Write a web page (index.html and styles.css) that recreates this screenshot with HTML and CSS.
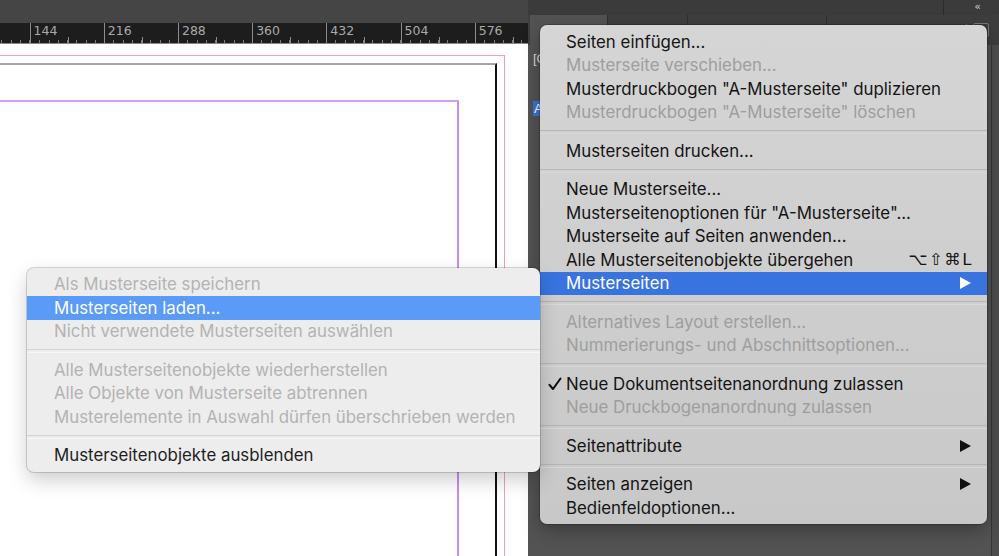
FILE: index.html
```html
<!DOCTYPE html>
<html lang="de">
<head>
<meta charset="utf-8">
<title>Seiten – Musterseiten</title>
<link rel="stylesheet" href="styles.css">
</head>
<body>
<div class="app">
  <div class="doc">
    <div class="toolbar"></div>
    <div class="ruler">
      <div class="seg">72</div>
      <div class="seg">144</div>
      <div class="seg">216</div>
      <div class="seg">288</div>
      <div class="seg">360</div>
      <div class="seg">432</div>
      <div class="seg">504</div>
      <div class="seg">576</div>
      <div class="seg">648</div>
    </div>
    <div class="canvas">
      <div class="bleed">
        <div class="page">
          <div class="margins"></div>
        </div>
      </div>
    </div>
  </div>
  <div class="panel">
    <div class="dock-head"><span class="dock-div"></span><span class="collapse">‹‹</span></div>
    <div class="tabs">
      <div class="tab active"><span class="x">×</span>Seiten</div>
      <div class="tab">Ebenen</div>
      <div class="tab">Verknüpfungen</div>
      <div class="tab-fill"><span class="more">»</span><span class="bar"></span><span class="hamb"></span></div>
    </div>
    <div class="panel-body">
      <div class="plist">
        <div class="prow">[Ohne]</div>
        <div class="prow sel"><span class="hl">A</span>-Musterseite</div>
      </div>
      <div class="scroll"></div>
    </div>
  </div>
</div>

<div class="menu main-menu">
  <div class="item"><span class="mark"></span><span>Seiten einfügen...</span></div>
  <div class="item dis"><span class="mark"></span><span>Musterseite verschieben...</span></div>
  <div class="item"><span class="mark"></span><span>Musterdruckbogen "A-Musterseite" duplizieren</span></div>
  <div class="item dis"><span class="mark"></span><span>Musterdruckbogen "A-Musterseite" löschen</span></div>
  <div class="sep"></div>
  <div class="item"><span class="mark"></span><span>Musterseiten drucken...</span></div>
  <div class="sep"></div>
  <div class="item"><span class="mark"></span><span>Neue Musterseite...</span></div>
  <div class="item"><span class="mark"></span><span>Musterseitenoptionen für "A-Musterseite"...</span></div>
  <div class="item"><span class="mark"></span><span>Musterseite auf Seiten anwenden...</span></div>
  <div class="item"><span class="mark"></span><span>Alle Musterseitenobjekte übergehen</span><span class="key">⌥⇧⌘L</span></div>
  <div class="item hot"><span class="mark"></span><span>Musterseiten</span><svg class="arrow" width="11" height="12" viewBox="0 0 11 12"><polygon points="0,0 11,6 0,12" fill="currentColor"/></svg></div>
  <div class="sep"></div>
  <div class="item dis"><span class="mark"></span><span>Alternatives Layout erstellen...</span></div>
  <div class="item dis"><span class="mark"></span><span>Nummerierungs- und Abschnittsoptionen...</span></div>
  <div class="sep"></div>
  <div class="item"><span class="mark"><svg width="14" height="14" viewBox="0 0 14 14"><path d="M1.5 7.8 L5 12 L12.5 1.5" fill="none" stroke="#111" stroke-width="2.1" stroke-linecap="round" stroke-linejoin="round"/></svg></span><span>Neue Dokumentseitenanordnung zulassen</span></div>
  <div class="item dis"><span class="mark"></span><span>Neue Druckbogenanordnung zulassen</span></div>
  <div class="sep"></div>
  <div class="item"><span class="mark"></span><span>Seitenattribute</span><svg class="arrow" width="11" height="12" viewBox="0 0 11 12"><polygon points="0,0 11,6 0,12" fill="currentColor"/></svg></div>
  <div class="sep"></div>
  <div class="item"><span class="mark"></span><span>Seiten anzeigen</span><svg class="arrow" width="11" height="12" viewBox="0 0 11 12"><polygon points="0,0 11,6 0,12" fill="currentColor"/></svg></div>
  <div class="item"><span class="mark"></span><span>Bedienfeldoptionen...</span></div>
</div>

<div class="menu sub-menu">
  <div class="item dis"><span class="mark"></span><span>Als Musterseite speichern</span></div>
  <div class="item hot"><span class="mark"></span><span>Musterseiten laden...</span></div>
  <div class="item dis"><span class="mark"></span><span>Nicht verwendete Musterseiten auswählen</span></div>
  <div class="sep"></div>
  <div class="item dis"><span class="mark"></span><span>Alle Musterseitenobjekte wiederherstellen</span></div>
  <div class="item dis"><span class="mark"></span><span>Alle Objekte von Musterseite abtrennen</span></div>
  <div class="item dis"><span class="mark"></span><span>Musterelemente in Auswahl dürfen überschrieben werden</span></div>
  <div class="sep"></div>
  <div class="item"><span class="mark"></span><span>Musterseitenobjekte ausblenden</span></div>
</div>
</body>
</html>
```

FILE: styles.css
```css
* { box-sizing: border-box; }
html, body { margin: 0; padding: 0; }
body {
  width: 999px;
  height: 556px;
  overflow: hidden;
  background: #444;
  font-family: Inter, "Noto Sans", "DejaVu Sans", sans-serif;
  position: relative;
}
.app {
  display: flex;
  width: 999px;
  height: 556px;
}
.doc {
  width: 528px;
  flex: none;
  display: flex;
  flex-direction: column;
  overflow: hidden;
}
.toolbar {
  height: 23px;
  background: #454545;
  flex: none;
}
.ruler {
  height: 21px;
  flex: none;
  background: #1d1d1d;
  border-bottom: 1px solid #8a8a8a;
  display: flex;
  margin-left: -44.6px;
  overflow: hidden;
}
.seg {
  flex: none;
  width: 74.2px;
  border-left: 1px solid #8d8d8d;
  padding: 1px 0 0 3px;
  font-family: "DejaVu Sans", sans-serif;
  font-size: 12.5px;
  line-height: 14px;
  color: #a9a9a9;
  background:
    linear-gradient(#8d8d8d, #8d8d8d) 37px 100% / 1px 6px no-repeat,
    repeating-linear-gradient(to right, transparent 0 8.275px, #7d7d7d 8.275px 9.275px) 0 100% / 100% 3px no-repeat;
}
.canvas {
  flex: 1;
  background: #fff;
  overflow: hidden;
  padding-top: 11px;
}
.bleed {
  margin-left: -20px;
  width: 525px;
  height: 600px;
  border-top: 1px solid #f5a0b4;
  border-right: 1px solid #f5a0b4;
  padding-top: 7px;
}
.page {
  width: 517px;
  height: 600px;
  border-top: 2px solid #a4a4a4;
  border-right: 2px solid #111;
  padding-top: 35px;
}
.margins {
  width: 479px;
  height: 600px;
  border-top: 2px solid #d49cfb;
  border-right: 2px solid #c98bf6;
}

/* right panel */
.panel {
  flex: 1;
  display: flex;
  flex-direction: column;
  background: #535353;
}
.dock-head {
  height: 15px;
  flex: none;
  background: #3b3b3b;
  display: flex;
  justify-content: flex-end;
  align-items: stretch;
  font-family: "DejaVu Sans", sans-serif;
}
.dock-div {
  width: 1px;
  background: #2b2b2b;
  margin-right: 30px;
}
.collapse {
  font-size: 11px;
  line-height: 14px;
  color: #c9c9c9;
  margin-right: 20px;
  letter-spacing: -2px;
}
.tabs {
  height: 30px;
  flex: none;
  display: flex;
  background: #3e3e3e;
  padding-left: 2px;
  font-family: "Liberation Sans", sans-serif;
  font-size: 13px;
  font-weight: bold;
  color: #cfcfcf;
}
.tab {
  padding: 7px 12px 0;
  border-right: 1px solid #2e2e2e;
  white-space: nowrap;
}
.tab.active {
  width: 78px;
  background: #535353;
  color: #e6e6e6;
}
.tab:nth-child(2) { width: 80px; }
.tab:nth-child(3) { width: 139px; }
.x { font-weight: normal; margin-right: 6px; color: #aaa; }
.tab-fill {
  flex: 1;
  display: flex;
  justify-content: flex-end;
  align-items: center;
  gap: 6px;
  padding-right: 10px;
}
.more { color: #aaa; font-weight: normal; }
.bar { width: 1px; height: 12px; background: #888; }
.hamb { width: 16px; height: 14px; border: 1px solid #777; border-radius: 2px; }
.panel-body {
  flex: 1;
  display: flex;
}
.plist {
  flex: 1;
  padding: 6px 0 0 5px;
  font-family: "Liberation Sans", sans-serif;
  font-size: 13px;
  color: #ddd;
  display: flex;
  flex-direction: column;
  gap: 34px;
}
.prow { height: 16px; line-height: 16px; }
.hl { background: #3c73d8; color: #fff; padding: 0 1px; }
.scroll {
  width: 8px;
  flex: none;
  border-left: 1px solid #363636;
  background: #4d4d4d;
}

/* menus */
.menu {
  position: absolute;
  font-size: 16.85px;
}
.main-menu {
  left: 540px;
  top: 25px;
  width: 447px;
  padding: 5px 0 4px;
  border-radius: 7px;
  background: linear-gradient(#d5d5d5, #c8c8c8);
  box-shadow: 0 0 0 1px rgba(0,0,0,0.2), 0 6px 18px rgba(0,0,0,0.3);
  color: #141414;
}
.sub-menu {
  left: 27px;
  top: 268px;
  width: 513px;
  padding: 4px 0 5px;
  border-radius: 7px;
  background: #ededed;
  box-shadow: 0 0 0 1px rgba(0,0,0,0.16), 0 8px 20px rgba(0,0,0,0.2);
  color: #1e1e1e;
  z-index: 2;
}
.item {
  height: 23.5px;
  display: flex;
  align-items: center;
  padding-right: 15px;
  white-space: nowrap;
}
.item .mark {
  width: 26px;
  flex: none;
  display: flex;
  justify-content: flex-end;
  padding-right: 4px;
  align-items: center;
}
.sub-menu .item .mark { width: 27px; }
.item > span:nth-child(2) { flex: 1; }
.item.dis { color: #9e9e9e; }
.sub-menu .item.dis { color: #b3b3b3; }
.item.hot { background: #3873df; color: #fff; }
.sub-menu .item.hot { background: #5a9bf8; height: 24px; }
.key {
  font-family: "DejaVu Sans", sans-serif;
  font-size: 16.5px;
  letter-spacing: 1.5px;
  margin-right: -1px;
}
.arrow { color: #111; margin-right: 1px; }
.item.hot .arrow { color: #fff; }
.sep {
  height: 15px;
  position: relative;
}
.sep::after {
  content: "";
  position: absolute;
  left: 0;
  right: 0;
  top: 6px;
  height: 2px;
  border-top: 1px solid #b6b6b6;
  border-bottom: 1px solid #d8d8d8;
}
.sub-menu .sep::after {
  border-top-color: #d3d3d3;
  border-bottom-color: #f7f7f7;
}
```
